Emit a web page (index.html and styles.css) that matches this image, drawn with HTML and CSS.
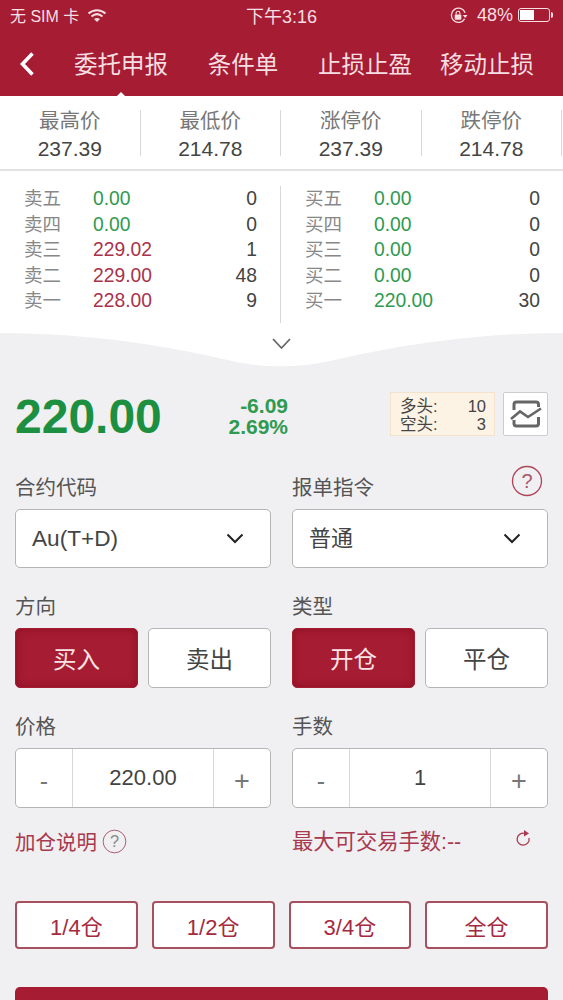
FILE: index.html
```html
<!DOCTYPE html>
<html lang="zh-CN">
<head>
  <meta charset="UTF-8">
  <meta name="viewport" content="width=device-width, initial-scale=1.0">
  <title>委托申报</title>
  <link rel="stylesheet" href="styles.css">
</head>
<body>
  <header class="app-header">
    <div class="status-bar">
      <div class="status-left">
        <span>无 SIM 卡</span>
        <svg class="wifi" viewBox="0 0 20 15" width="20" height="15">
          <path d="M1.5 5.5C6.5 1 13.500 1 18.500 5.500M4.500 8.500C8 5.500 12 5.500 15.500 8.500" fill="none" stroke="#f6dfe3" stroke-width="2"/>
          <path d="M7 11C9 9.500 11 9.500 13 11L10 14Z" fill="#f6dfe3"/>
        </svg>
      </div>
      <div class="status-time">下午3:16</div>
      <div class="status-right">
        <svg class="rotate-lock" viewBox="0 0 20 20" width="19" height="19">
          <path d="M16.500 13.500A7.500 7.500 0 1 1 17 7" fill="none" stroke="#f6dfe3" stroke-width="1.400"/>
          <path d="M14.500 9.500H19.500L17 12.500Z" fill="#f6dfe3"/>
          <rect x="6" y="9" width="7" height="5.500" rx="1" fill="#f6dfe3"/>
          <path d="M7.500 9V7.500A2 2 0 0 1 11.500 7.500V9" fill="none" stroke="#f6dfe3" stroke-width="1.200"/>
        </svg>
        <span>48%</span>
        <div class="battery"><div class="battery-level"></div></div>
      </div>
    </div>
    <nav class="tabs">
      <svg class="back" viewBox="0 0 16 26" width="16" height="26">
        <path d="M13.500 2.500L3.500 13L13.500 23.500" fill="none" stroke="#fff" stroke-width="3.600"/>
      </svg>
      <div class="tab active">委托申报</div>
      <div class="tab">条件单</div>
      <div class="tab">止损止盈</div>
      <div class="tab">移动止损</div>
    </nav>
  </header>

  <section class="stats">
    <div class="stat"><div class="stat-label">最高价</div><div class="stat-value">237.39</div></div>
    <div class="stat"><div class="stat-label">最低价</div><div class="stat-value">214.78</div></div>
    <div class="stat"><div class="stat-label">涨停价</div><div class="stat-value">237.39</div></div>
    <div class="stat"><div class="stat-label">跌停价</div><div class="stat-value">214.78</div></div>
  </section>

  <section class="book">
    <div class="book-side">
      <div class="book-row"><span class="book-name">卖五</span><span class="up-none">0.00</span><span class="book-qty">0</span></div>
      <div class="book-row"><span class="book-name">卖四</span><span class="up-none">0.00</span><span class="book-qty">0</span></div>
      <div class="book-row"><span class="book-name">卖三</span><span class="ask">229.02</span><span class="book-qty">1</span></div>
      <div class="book-row"><span class="book-name">卖二</span><span class="ask">229.00</span><span class="book-qty">48</span></div>
      <div class="book-row"><span class="book-name">卖一</span><span class="ask">228.00</span><span class="book-qty">9</span></div>
    </div>
    <div class="book-side">
      <div class="book-row"><span class="book-name">买五</span><span class="up-none">0.00</span><span class="book-qty">0</span></div>
      <div class="book-row"><span class="book-name">买四</span><span class="up-none">0.00</span><span class="book-qty">0</span></div>
      <div class="book-row"><span class="book-name">买三</span><span class="up-none">0.00</span><span class="book-qty">0</span></div>
      <div class="book-row"><span class="book-name">买二</span><span class="up-none">0.00</span><span class="book-qty">0</span></div>
      <div class="book-row"><span class="book-name">买一</span><span class="up-none">220.00</span><span class="book-qty">30</span></div>
    </div>
  </section>

  <svg class="notch" viewBox="0 0 563 40" width="563" height="40">
    <path d="M0 0H563C470 0 390 14 330 28C300 35 262 35 232 28C172 14 93 0 0 0Z" fill="#fff"/>
    <path d="M273 6L281.500 15L290 6" fill="none" stroke="#666" stroke-width="1.800"/>
  </svg>

  <main class="panel">
    <div class="quote">
      <div class="last-price">220.00</div>
      <div class="change">
        <div>-6.09</div>
        <div>2.69%</div>
      </div>
      <div class="position">
        <div class="position-row"><span>多头:</span><span>10</span></div>
        <div class="position-row"><span>空头:</span><span>3</span></div>
      </div>
      <button class="chart-btn">
        <svg viewBox="0 0 32 30" width="32" height="30">
          <path d="M4 11V5.500Q4 3 6.500 3H26Q28.500 3 28.500 5.500V8M28.500 18V24.500Q28.500 27 26 27H6.500Q4 27 4 24.500V21" fill="none" stroke="#666" stroke-width="3"/>
          <path d="M1 20L10 12.500L18 18L31 9.500" fill="none" stroke="#666" stroke-width="2.600"/>
        </svg>
      </button>
    </div>

    <div class="form-grid">
      <div class="field">
        <div class="field-label">合约代码</div>
        <div class="select"><span>Au(T+D)</span>
          <svg viewBox="0 0 18 11" width="18" height="11"><path d="M1.500 1.500L9 9L16.500 1.500" fill="none" stroke="#222" stroke-width="2"/></svg>
        </div>
      </div>
      <div class="field">
        <div class="field-label">报单指令
          <svg class="help" viewBox="0 0 32 32" width="32" height="32">
            <circle cx="16" cy="16" r="14.500" fill="none" stroke="#b0455a" stroke-width="1.300"/>
            <text x="16" y="23" text-anchor="middle" class="help-mark">?</text>
          </svg>
        </div>
        <div class="select"><span class="select-cjk">普通</span>
          <svg viewBox="0 0 18 11" width="18" height="11"><path d="M1.500 1.500L9 9L16.500 1.500" fill="none" stroke="#222" stroke-width="2"/></svg>
        </div>
      </div>

      <div class="field">
        <div class="field-label">方向</div>
        <div class="toggle">
          <button class="toggle-btn on">买入</button>
          <button class="toggle-btn">卖出</button>
        </div>
      </div>
      <div class="field">
        <div class="field-label">类型</div>
        <div class="toggle">
          <button class="toggle-btn on">开仓</button>
          <button class="toggle-btn">平仓</button>
        </div>
      </div>

      <div class="field">
        <div class="field-label">价格</div>
        <div class="stepper">
          <div class="step minus">-</div>
          <div class="step-value">220.00</div>
          <div class="step plus">+</div>
        </div>
      </div>
      <div class="field">
        <div class="field-label">手数</div>
        <div class="stepper">
          <div class="step minus">-</div>
          <div class="step-value">1</div>
          <div class="step plus">+</div>
        </div>
      </div>

      <div class="note">加仓说明
        <svg viewBox="0 0 26 26" width="25" height="25">
          <circle cx="13" cy="13" r="11.800" fill="none" stroke="#a8566a" stroke-width="1"/>
          <text x="13" y="19" text-anchor="middle" class="note-mark">?</text>
        </svg>
      </div>
      <div class="note note-max">
        <span>最大可交易手数:--</span>
        <svg class="refresh" viewBox="0 0 18 20" width="18" height="20">
          <path d="M11 4.500A6 6 0 1 0 15 9" fill="none" stroke="#a8394e" stroke-width="1.300"/>
          <path d="M10 1L15 4.500L10 7.500Z" fill="#a8394e"/>
        </svg>
      </div>
    </div>

    <div class="ratios">
      <button class="ratio">1/4仓</button>
      <button class="ratio">1/2仓</button>
      <button class="ratio">3/4仓</button>
      <button class="ratio">全仓</button>
    </div>

    <button class="submit"></button>
  </main>
</body>
</html>
```

FILE: styles.css
```css
/* Order entry screen */
html, body {
  height: 1000px;
  overflow: hidden;
}

body {
  margin: 0;
  background-color: #f0eff1;
  color: #444;
  font-family: "Liberation Sans", "Noto Sans CJK SC", sans-serif;
}

button {
  font-family: inherit;
  padding: 0;
}

/* Header */
.app-header {
  background-color: #a61c32;
  height: 96px;
  color: #f6dfe3;
}

.status-bar {
  height: 32px;
  display: grid;
  grid-template-columns: 1fr auto 1fr;
  align-items: center;
  padding: 0 10px 2px;
  box-sizing: border-box;
  font-size: 16px;
}

.status-left {
  display: flex;
  align-items: center;
  gap: 8px;
}

.status-time {
  font-size: 18px;
}

.status-right {
  display: flex;
  align-items: center;
  justify-content: flex-end;
  gap: 9px;
  font-size: 18px;
}

.status-right span {
  margin-right: -4px;
}

.battery {
  width: 32px;
  height: 14px;
  margin-right: 3px;
  border: 1px solid #f6dfe3;
  border-radius: 3px;
  padding: 1px;
  box-sizing: border-box;
  position: relative;
}

.battery::after {
  content: "";
  position: absolute;
  right: -4px;
  top: 3px;
  width: 2px;
  height: 6px;
  border-radius: 0 2px 2px 0;
  background-color: #f6dfe3;
}

.battery-level {
  width: 50%;
  height: 100%;
  background-color: #fff;
}

.tabs {
  height: 64px;
  display: flex;
  align-items: center;
  padding-left: 60px;
  position: relative;
}

.back {
  position: absolute;
  left: 19px;
  top: 19px;
}

.tab {
  width: 122px;
  text-align: center;
  font-size: 23.500px;
  padding-bottom: 3px;
  position: relative;
}

.tab.active::after {
  content: "";
  position: absolute;
  left: 54px;
  top: 46px;
  border-left: 7px solid transparent;
  border-right: 7px solid transparent;
  border-bottom: 7px solid #fff;
}

/* Price summary */
.stats {
  height: 75px;
  background-color: #fff;
  border-bottom: 2px solid #e2e2e4;
  box-sizing: border-box;
  display: grid;
  grid-template-columns: repeat(4, 140.500px);
  align-items: start;
  padding-top: 14px;
}

.stat {
  height: 46px;
  border-right: 1px solid #d8d8d8;
  text-align: center;
}

.stat-label {
  font-size: 20.500px;
  line-height: 22px;
  color: #777;
}

.stat-value {
  font-size: 21px;
  line-height: 33px;
  color: #444;
}

/* Order book */
.book {
  background-color: #fff;
  height: 162px;
  display: grid;
  grid-template-columns: 281px 282px;
  padding-top: 15px;
  box-sizing: border-box;
}

.book-side {
  height: 137px;
  padding: 0 23px 0 24px;
  box-sizing: border-box;
}

.book-side:first-child {
  border-right: 1px solid #d8d8d8;
}

.book-row {
  display: grid;
  grid-template-columns: 69px 1fr auto;
  height: 25.600px;
  line-height: 25.600px;
  font-size: 19.300px;
}

.book-name {
  font-size: 18.500px;
  color: #888;
}

.book-qty {
  color: #444;
}

.up-none {
  color: #2f9a50;
}

.ask {
  color: #a8324a;
}

/* Curved edge under the book */
.notch {
  display: block;
  margin-bottom: -40px;
}

/* Form panel */
.panel {
  padding: 59px 15px 0;
}

.quote {
  display: flex;
  align-items: center;
  height: 44px;
}

.last-price {
  width: 212px;
  padding-top: 5px;
  font-size: 48px;
  font-weight: bold;
  color: #1c8f40;
}

.change {
  width: 61px;
  padding-top: 3px;
  text-align: right;
  font-size: 21px;
  font-weight: bold;
  line-height: 21px;
  color: #2f9a50;
}

.position {
  width: 105px;
  height: 44px;
  margin-left: 102px;
  padding: 4px 8px 0 9px;
  box-sizing: border-box;
  background-color: #fdf3e5;
  border: 1px solid #f3e2cd;
  font-size: 16.500px;
  line-height: 18px;
}

.position-row {
  display: flex;
  justify-content: space-between;
}

.chart-btn {
  width: 45px;
  height: 44px;
  margin-left: 8px;
  background-color: #fff;
  border: 1px solid #ccc;
  border-radius: 2px;
  display: flex;
  align-items: center;
  justify-content: center;
}

.form-grid {
  display: grid;
  grid-template-columns: 256px 256px;
  column-gap: 21px;
  margin-top: 38px;
}

.field-label {
  height: 35px;
  font-size: 20.500px;
  line-height: 28px;
  color: #555;
  position: relative;
}

.help {
  position: absolute;
  right: 5px;
  top: -9px;
}

.help-mark {
  font-size: 20px;
  fill: #a8566a;
}

.note-mark {
  font-size: 17px;
  fill: #888;
}

.select {
  height: 59px;
  margin-bottom: 25px;
  padding: 0 26px 0 16px;
  display: flex;
  align-items: center;
  justify-content: space-between;
  background-color: #fff;
  border: 1px solid #b5b5b5;
  border-radius: 5px;
  box-sizing: border-box;
  font-size: 22.600px;
  color: #444;
}

.select-cjk {
  font-size: 22px;
  padding-bottom: 5px;
}

.toggle {
  display: grid;
  grid-template-columns: 1fr 1fr;
  column-gap: 10px;
  margin-bottom: 25px;
}

.toggle-btn {
  height: 60px;
  background-color: #fff;
  border: 1px solid #b5b5b5;
  border-radius: 5px;
  font-size: 23.500px;
  color: #444;
}

.toggle-btn.on {
  background-color: #a61c32;
  border-color: #a61c32;
  box-shadow: inset 0 0 8px #8c0f22;
  color: #fbe4e7;
}

.stepper {
  height: 60px;
  display: grid;
  grid-template-columns: 56px 1fr 56px;
  background-color: #fff;
  border: 1px solid #b5b5b5;
  border-radius: 5px;
  box-sizing: border-box;
}

.step {
  display: flex;
  align-items: center;
  justify-content: center;
  font-size: 25px;
  color: #777;
  padding-top: 6px;
}

.step.plus {
  font-size: 27px;
}

.step-value {
  display: flex;
  align-items: center;
  justify-content: center;
  border-left: 1px solid #d8d8d8;
  border-right: 1px solid #d8d8d8;
  font-size: 22px;
  color: #444;
}

.note {
  display: flex;
  align-items: center;
  gap: 5px;
  height: 30px;
  margin-top: 18px;
  font-size: 20.500px;
  color: #a8394e;
}

.note-max {
  justify-content: space-between;
  box-sizing: border-box;
  padding: 0 16px 4px 0;
  font-size: 21.300px;
}

.ratios {
  display: grid;
  grid-template-columns: repeat(4, 1fr);
  column-gap: 14px;
  margin-top: 45px;
}

.ratio {
  height: 48px;
  background-color: #fff;
  border: 2px solid #a8505f;
  border-radius: 4px;
  font-size: 22px;
  color: #a52a40;
}

.submit {
  display: block;
  width: 100%;
  height: 60px;
  margin-top: 38px;
  background-color: #a61c32;
  border: none;
  border-radius: 5px;
}
```
